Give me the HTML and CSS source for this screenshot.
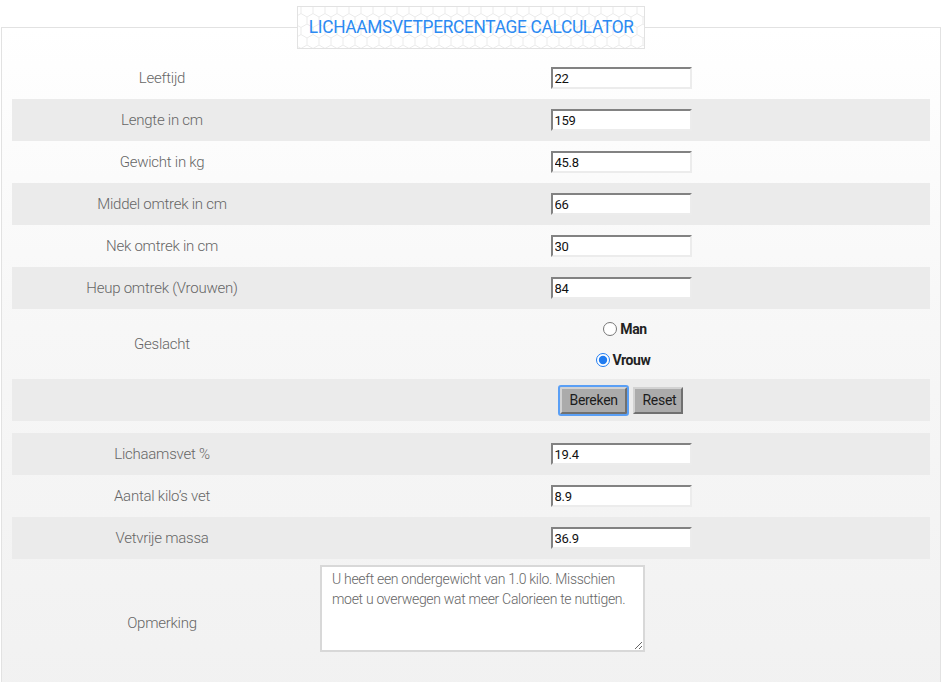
FILE: index.html
```html
<!DOCTYPE html>
<html lang="nl">
<head>
<meta charset="utf-8">
<title>Lichaamsvetpercentage Calculator</title>
<link rel="stylesheet" href="styles.css">
</head>
<body>
<div class="calc">
  <div class="title">
    <svg class="hex" aria-hidden="true">
      <defs>
        <pattern id="hp" width="12" height="21" patternUnits="userSpaceOnUse" x="3" y="-4">
          <path d="M6 0L12 3.5V10.5L6 14L0 10.5V3.5Z M6 14V21" fill="none" stroke="#ebebeb" stroke-width="1"/>
        </pattern>
      </defs>
      <rect width="100%" height="100%" fill="url(#hp)"/>
    </svg>
    <span class="title-text">LICHAAMSVETPERCENTAGE CALCULATOR</span>
  </div>

  <div class="rows">
    <div class="row"><div class="lbl">Leeftijd</div><div class="val"><input class="inp" type="text" value="22"></div></div>
    <div class="row alt"><div class="lbl">Lengte in cm</div><div class="val"><input class="inp" type="text" value="159"></div></div>
    <div class="row"><div class="lbl">Gewicht in kg</div><div class="val"><input class="inp" type="text" value="45.8"></div></div>
    <div class="row alt"><div class="lbl">Middel omtrek in cm</div><div class="val"><input class="inp" type="text" value="66"></div></div>
    <div class="row"><div class="lbl">Nek omtrek in cm</div><div class="val"><input class="inp" type="text" value="30"></div></div>
    <div class="row alt"><div class="lbl">Heup omtrek (Vrouwen)</div><div class="val"><input class="inp" type="text" value="84"></div></div>
    <div class="row tall"><div class="lbl">Geslacht</div>
      <div class="val radios">
        <label class="radio radio-man"><input type="radio" name="g"><span>Man</span></label>
        <label class="radio radio-vrouw"><input type="radio" name="g" checked><span>Vrouw</span></label>
      </div>
    </div>
    <div class="row alt"><div class="lbl"></div>
      <div class="val btns">
        <button class="btn focus" type="button">Bereken</button>
        <button class="btn" type="button">Reset</button>
      </div>
    </div>
    <div class="spacer"></div>
    <div class="row alt"><div class="lbl">Lichaamsvet %</div><div class="val"><input class="inp" type="text" value="19.4"></div></div>
    <div class="row"><div class="lbl">Aantal kilo’s vet</div><div class="val"><input class="inp" type="text" value="8.9"></div></div>
    <div class="row alt"><div class="lbl">Vetvrije massa</div><div class="val"><input class="inp" type="text" value="36.9"></div></div>
    <div class="row note"><div class="lbl">Opmerking</div>
      <div class="val left"><textarea class="ta">U heeft een ondergewicht van 1.0 kilo. Misschien moet u overwegen wat meer Calorieen te nuttigen.</textarea></div>
    </div>
  </div>
</div>
</body>
</html>
```
FILE: styles.css
```css
html, body {
  margin: 0;
  padding: 0;
  background: #ffffff;
  font-family: Roboto, "Liberation Sans", sans-serif;
}

.calc {
  margin: 27px 3px 0 1px;
  border: 1px solid #e2e2e2;
  border-bottom: none;
  background: linear-gradient(#ffffff 0px, #f7f7f7 300px, #f1f1f1 682px);
  padding: 0 10px;
  min-height: 680px;
}

.title {
  position: relative;
  width: 346px;
  height: 41px;
  margin: -22px auto 0;
  border: 1px solid #e2e2e2;
  background: #ffffff;
  display: flex;
  align-items: center;
  justify-content: center;
  overflow: hidden;
}

.hex {
  position: absolute;
  left: 0;
  top: 0;
  width: 100%;
  height: 100%;
}

.title-text {
  position: relative;
  color: #2b8af2;
  font-size: 18px;
  letter-spacing: -0.3px;
  transform: scaleX(0.96);
  white-space: nowrap;
  margin-top: -3px;
}

.rows {
  margin-top: 8px;
}

.row {
  display: grid;
  grid-template-columns: 300px 1fr;
  height: 42px;
  align-items: center;
}

.row.alt {
  background: #ebebeb;
}

.row.tall {
  height: 70px;
}

.spacer {
  height: 12px;
}

.lbl {
  text-align: center;
  color: #666666;
  font-size: 15px;
  font-weight: 300;
  letter-spacing: -0.25px;
}

.val {
  display: flex;
  justify-content: center;
  align-items: center;
}

.val.left {
  justify-content: flex-start;
  padding-left: 8px;
}

.inp {
  box-sizing: border-box;
  width: 141px;
  height: 22px;
  margin: 0;
  padding: 1px 2px 0;
  border-width: 2px;
  border-style: solid;
  border-color: #828282 #ececec #ececec #828282;
  background: #ffffff;
  color: #111111;
  font-family: Roboto, "Liberation Sans", sans-serif;
  font-size: 13px;
  letter-spacing: -0.3px;
  outline: none;
}

.radios {
  flex-direction: column;
  gap: 15px;
  padding-left: 4px;
}

.radio {
  display: flex;
  align-items: center;
  gap: 3px;
  font-size: 14px;
  font-weight: 700;
  color: #222222;
  letter-spacing: -0.4px;
}

.radio input {
  margin: 0;
  width: 14px;
  height: 14px;
  accent-color: #1f7bf0;
}

.radio-man {
  margin-left: 4px;
}

.btns {
  gap: 6px;
}

.btn {
  box-sizing: border-box;
  height: 27px;
  padding: 0 8px;
  margin: 0;
  border-width: 2px;
  border-style: solid;
  border-color: #d2d2d2 #707070 #707070 #d2d2d2;
  background: #ababab;
  color: #1c1c1c;
  font-family: Roboto, "Liberation Sans", sans-serif;
  font-size: 14px;
  letter-spacing: -0.3px;
}

.btn.focus {
  outline: 2px solid #5a9ff5;
  outline-offset: 0px;
  border-radius: 1px;
  width: 67px;
}

.btn:not(.focus) {
  width: 50px;
}

.row.note {
  height: 128px;
  align-items: start;
}

.row.note .lbl {
  align-self: center;
}

.ta {
  box-sizing: border-box;
  width: 325px;
  height: 87px;
  margin-top: 6px;
  padding: 2px 10px;
  border: 2px solid #d8d8d8;
  background: #ffffff;
  color: #666666;
  font-family: Roboto, "Liberation Sans", sans-serif;
  font-size: 14px;
  font-weight: 300;
  line-height: 20px;
  letter-spacing: -0.3px;
  resize: both;
  outline: none;
}
```
